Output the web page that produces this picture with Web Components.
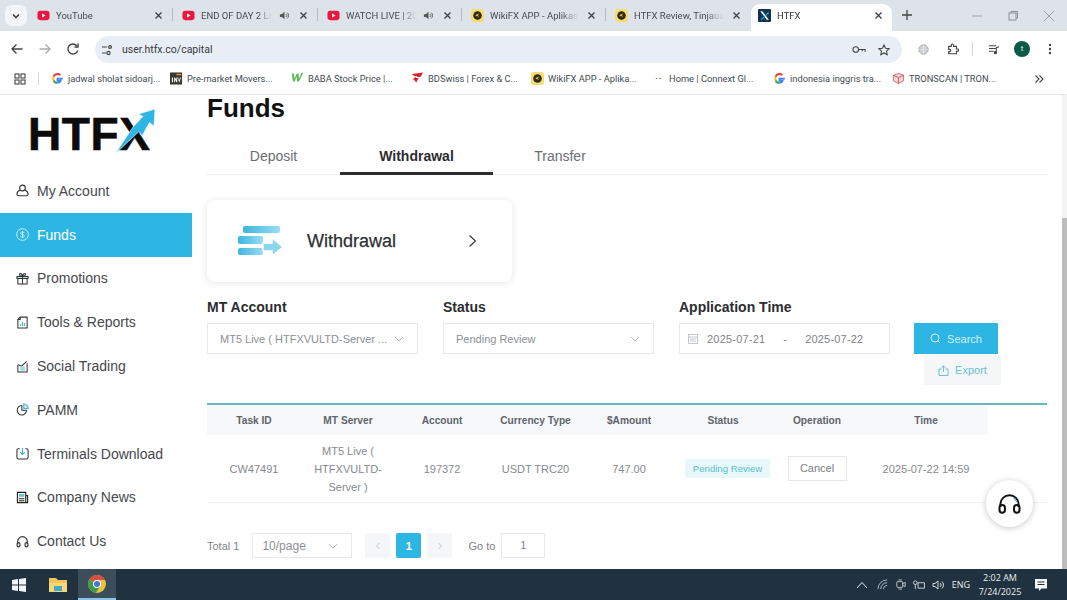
<!DOCTYPE html>
<html>
<head>
<meta charset="utf-8">
<title>HTFX</title>
<style>
html, body { margin: 0; height: 100%; overflow: hidden; background: #fff; }
body { display: flex; flex-direction: column; width: 1067px; height: 600px; font-family: "Liberation Sans", Arial, sans-serif; }
#middle { flex: 1; display: flex; min-height: 0; position: relative; }
</style>
</head>
<body>
<browser-tabs>
  <browser-tab icon="yt" width="145">YouTube</browser-tab>
  <browser-tab icon="yt" width="145" audio>END OF DAY 2 Live</browser-tab>
  <browser-tab icon="yt" width="144" audio>WATCH LIVE | 2025</browser-tab>
  <browser-tab icon="wiki" width="144">WikiFX APP - Aplikasi</browser-tab>
  <browser-tab icon="wiki" width="145" noline>HTFX Review, Tinjauan</browser-tab>
  <browser-tab icon="htfx" width="141" active>HTFX</browser-tab>
</browser-tabs>
<browser-toolbar>user.htfx.co/capital</browser-toolbar>
<bookmark-bar>
  <book-mark icon="g" width="119">jadwal sholat sidoarj...</book-mark>
  <book-mark icon="inv" width="121">Pre-market Movers...</book-mark>
  <book-mark icon="w" width="120">BABA Stock Price |...</book-mark>
  <book-mark icon="bd" width="120">BDSwiss | Forex &amp; C...</book-mark>
  <book-mark icon="wiki" width="121">WikiFX APP - Aplika...</book-mark>
  <book-mark icon="dash" width="121">Home | Connext Gl...</book-mark>
  <book-mark icon="g" width="119">indonesia inggris tra...</book-mark>
  <book-mark icon="tron" width="130">TRONSCAN | TRON...</book-mark>
</bookmark-bar>
<div id="middle">
  <side-nav>
    <side-item icon="user">My Account</side-item>
    <side-item icon="dollar" active>Funds</side-item>
    <side-item icon="gift">Promotions</side-item>
    <side-item icon="report">Tools &amp; Reports</side-item>
    <side-item icon="social">Social Trading</side-item>
    <side-item icon="pamm">PAMM</side-item>
    <side-item icon="download">Terminals Download</side-item>
    <side-item icon="news">Company News</side-item>
    <side-item icon="headset">Contact Us</side-item>
  </side-nav>
  <funds-page></funds-page>
  <page-scrollbar></page-scrollbar>
  <help-button></help-button>
</div>
<task-bar></task-bar>

<script>
/* global HTMLElement */

// Icons used in more than one component
const ICONS = {
  yt: '<svg viewBox="0 0 14 14"><rect x="0.5" y="2" width="13" height="10" rx="3" fill="#e8173f"/><path d="M5.6 4.9v4.2L9.2 7z" fill="#fff"/></svg>',
  wiki: '<svg viewBox="0 0 14 14"><rect width="14" height="14" rx="3" fill="#f6dd72"/><circle cx="7" cy="7" r="4.6" fill="#2b2a20"/><path d="M4.6 7.6c1.4-2.6 3.4-2.8 4.9-2.4-1.4.3-2 1-2.2 1.8 1 .1 1.5.6 1.6 1.2-1.4-.4-2.8-.6-4.3-.6z" fill="#e9b92b"/></svg>',
  htfx: '<svg viewBox="0 0 14 14"><rect width="14" height="14" rx="1" fill="#12344d"/><path d="M2.5 2.5h2.2l7 9H9.3z" fill="#fff"/><path d="M2.6 11.6l8.6-8.4.4 1.9-1 .2-6.4 6.3z" fill="#35b6e4"/></svg>',
  g: '<svg viewBox="0 0 14 14"><path d="M12.8 7.1H7v2.3h3.3c-.4 1.3-1.7 2.1-3.3 2.1" fill="none" stroke="#4285f4" stroke-width="2"/><path d="M7 11.9C5 11.9 3.4 10.7 2.7 9" fill="none" stroke="#34a853" stroke-width="2"/><path d="M2.7 9C2.4 7.7 2.4 6.4 2.8 5" fill="none" stroke="#fbbc05" stroke-width="2"/><path d="M2.8 5C3.5 3.3 5.1 2.1 7 2.1c1.2 0 2.3.4 3.1 1.2" fill="none" stroke="#ea4335" stroke-width="2"/></svg>',
  inv: '<svg viewBox="0 0 14 14"><rect width="13" height="13" y="0.5" fill="#3a3833"/><path d="M2 6h1.200v5H2zM4.500 6h1l1.300 3V6h1v5h-1L5.500 8v3h-1zM8.800 6l1 3.200 1-3.200h1l-1.500 5H10L8 6z" fill="#fff"/><rect x="7" y="2" width="5" height="1.5" fill="#e9a23b"/></svg>',
  w: '<svg viewBox="0 0 18 14"><path d="M1 2h3l1 7 3-7h2.400l.6 7 3.500-8H17l-6 12H8.300l-.5-6.500L5 13H2.600z" fill="#62b95c"/></svg>',
  bd: '<svg viewBox="0 0 16 14"><path d="M1 2.500L15 .5l-3.500 5.500H6.500l-1 1.500h4L6.500 13 5 11 2.500 8.500l3-2.500z" fill="#d9262e"/><path d="M3.500 5h4v1h-4z" fill="#fff"/></svg>',
  dash: '<svg viewBox="0 0 14 14"><path d="M4 7h2M7.500 7h2.500" stroke="#7f8f8f" stroke-width="1.3"/></svg>',
  tron: '<svg viewBox="0 0 14 14"><path d="M1.500 3.500L7 1.500l5.500 2v6L7 12.500l-5.500-3z" fill="#f1d8d8" stroke="#c6474f" stroke-width="0.8"/><path d="M1.500 3.500L7 6l5.500-2.500M7 6v6.500" fill="none" stroke="#c6474f" stroke-width="0.9"/></svg>',
  user: '<svg viewBox="0 0 14 14" fill="none" stroke="#333" stroke-width="1.2"><circle cx="7" cy="4.3" r="3.1"/><path d="M4.600 6.500C2.400 7.300 1 9 1 11c0 1.200.7 1.700 1.700 1.700h8.600c1 0 1.700-.5 1.700-1.700 0-2-1.400-3.700-3.600-4.500"/></svg>',
  dollar: '<svg viewBox="0 0 14 14" fill="none" stroke="#d5f1fb" stroke-width="1"><circle cx="7" cy="7" r="6.3"/><path d="M9 5.200C8.600 4.400 7.800 4.100 7 4.100c-1.100 0-1.900.6-1.900 1.400 0 1.800 3.900 1 3.900 2.900 0 .9-.9 1.500-2 1.500-.9 0-1.700-.4-2.100-1.100M7 3v8"/></svg>',
  gift: '<svg viewBox="0 0 14 14" fill="none" stroke="#333" stroke-width="1.1"><rect x="1" y="4.8" width="12" height="2.2" fill="#bfe6ea"/><path d="M2 7v5.800h10V7M7 4.800v8"/><path d="M7 4.500C5 4.500 3.500 3.700 3.800 2.300 4.300.9 6.400 1.900 7 4.500c.6-2.600 2.700-3.600 3.200-2.200.3 1.400-1.200 2.200-3.200 2.200z"/></svg>',
  report: '<svg viewBox="0 0 14 14" fill="none" stroke="#333" stroke-width="1.1"><path d="M4.500 1.200H12v11.600H2V3.700z"/><path d="M4.500 1.200v2.500H2"/><path d="M5 10.800V8.500M7 10.800V6.500M9 10.800V7.500" stroke="#56b8c4" stroke-width="1.2"/></svg>',
  social: '<svg viewBox="0 0 14 14" fill="none" stroke="#333" stroke-width="1.1"><path d="M2 5v8h10V3.500"/><path d="M2 5l4 1.700L11.500 1.500"/><rect x="4.5" y="7" width="5" height="4.5" fill="#9adbe0" stroke="none"/></svg>',
  pamm: '<svg viewBox="0 0 14 14" fill="none" stroke="#333" stroke-width="1.1"><path d="M6.300 2.800a5 5 0 1 0 5 5H6.300z"/><path d="M8.300 5.800V.8a5 5 0 0 1 5 5z" fill="#bfe6ea" stroke="#56b8c4"/></svg>',
  download: '<svg viewBox="0 0 14 14" fill="none" stroke="#333" stroke-width="1.1"><path d="M4 1.800H2.500A1.500 1.500 0 0 0 1 3.300v8A1.500 1.500 0 0 0 2.500 12.800h9a1.500 1.500 0 0 0 1.500-1.500v-8a1.500 1.500 0 0 0-1.500-1.500H10"/><path d="M7 1v6.500M4.500 5.500L7 8l2.500-2.500" stroke="#3fb4c9" stroke-width="1.3"/></svg>',
  news: '<svg viewBox="0 0 14 14" fill="none" stroke="#222" stroke-width="1.2"><path d="M1.500 1.500h9v11h-9zM10.500 5h2v7.500h-2"/><rect x="3" y="3.2" width="6" height="3" fill="#6cc3cf" stroke="none"/><path d="M3 8.300h6M3 10.500h6"/></svg>',
  headset: '<svg viewBox="0 0 14 14" fill="none" stroke="#333" stroke-width="1.3"><path d="M1.800 9V7a5.200 5.200 0 0 1 10.400 0v2"/><rect x="1.2" y="8.2" width="3" height="4.6" rx="1.5"/><rect x="9.8" y="8.2" width="3" height="4.6" rx="1.5"/></svg>'
}

const tabStripTemplate = document.createElement('template')
tabStripTemplate.innerHTML = `
<style>
:host {
  display: flex;
  align-items: flex-end;
  height: 31px;
  background: #dee3e9;
  font-family: Roboto, "Liberation Sans", sans-serif;
  padding-left: 5px;
  flex: none;
}
#menu {
  width: 22px;
  height: 21px;
  margin: 0 1px 5px 0;
  border-radius: 7px;
  background: #f3f5f8;
  display: flex;
  align-items: center;
  justify-content: center;
}
#menu svg { width: 8px; height: 6px; }
#plus {
  width: 14px;
  height: 14px;
  margin: 0 0 9px 8px;
}
#win {
  margin-left: auto;
  display: flex;
  align-self: stretch;
  align-items: center;
  padding-right: 11px;
  gap: 22px;
}
#win svg { width: 14px; height: 14px; }
</style>
<div id="menu"><svg viewBox="0 0 8 6"><path d="M1 1.500l3 3 3-3" fill="none" stroke="#333" stroke-width="1.4"/></svg></div>
<slot></slot>
<svg id="plus" viewBox="0 0 14 14"><path d="M7 2v10M2 7h10" stroke="#444" stroke-width="1.3"/></svg>
<div id="win">
  <svg viewBox="0 0 14 14"><path d="M2 7h10" stroke="#9ba1a8" stroke-width="1"/></svg>
  <svg viewBox="0 0 14 14" fill="none" stroke="#8b9198" stroke-width="1"><rect x="3" y="4" width="7" height="7"/><path d="M5 4V2.500h6.500V9H10"/></svg>
  <svg viewBox="0 0 14 14"><path d="M2 2l10 10M12 2L2 12" stroke="#9ba1a8" stroke-width="1"/></svg>
</div>`

class BrowserTabs extends HTMLElement {
  constructor () {
    super()
    this.attachShadow({ mode: 'open' }).appendChild(tabStripTemplate.content.cloneNode(true))
  }
}

const tabTemplate = document.createElement('template')
tabTemplate.innerHTML = `
<style>
:host {
  display: flex;
  align-items: center;
  box-sizing: border-box;
  height: 26px;
  padding: 0 9px 5px 9px;
  font-size: 9.5px;
  color: #444b52;
  position: relative;
  flex: none;
}
:host([active]) {
  background: #fff;
  border-radius: 9px 9px 0 0;
  padding: 0 8px 5px 7px;
  color: #30343a;
  height: 27px;
}
:host(:not([active]))::after {
  content: '';
  position: absolute;
  right: 0;
  top: 3px;
  height: 13px;
  width: 1px;
  background: #b6bcc4;
}
:host([noline])::after { display: none; }
#icon { width: 13px; height: 13px; flex: none; display: block; }
#text {
  flex: 1;
  margin-left: 6px;
  white-space: nowrap;
  overflow: hidden;
  -webkit-mask-image: linear-gradient(to right, #000 80%, transparent);
  mask-image: linear-gradient(to right, #000 80%, transparent);
}
.ctl { width: 11px; height: 11px; flex: none; margin-left: 7px; }
</style>
<span id="icon"></span>
<span id="text"><slot></slot></span>
<svg class="ctl" id="audio" viewBox="0 0 12 12" style="margin-right:1px"><path d="M1 4.500h2L6 2v8L3 7.500H1z" fill="#555"/><path d="M7.500 4.300a2.200 2.200 0 0 1 0 3.400M9 2.800a4.400 4.400 0 0 1 0 6.400" stroke="#555" fill="none"/></svg>
<svg class="ctl" id="close" viewBox="0 0 11 11"><path d="M2.500 2.500l6 6M8.500 2.500l-6 6" stroke="#444" stroke-width="1.4"/></svg>`

class BrowserTab extends HTMLElement {
  constructor () {
    super()
    this.shadow = this.attachShadow({ mode: 'open' })
    this.shadow.appendChild(tabTemplate.content.cloneNode(true))
  }

  connectedCallback () {
    this.style.width = this.getAttribute('width') + 'px'
    this.shadow.getElementById('icon').innerHTML = ICONS[this.getAttribute('icon')]
    if (!this.hasAttribute('audio')) {
      this.shadow.getElementById('audio').style.display = 'none'
    }
  }
}

const toolbarTemplate = document.createElement('template')
toolbarTemplate.innerHTML = `
<style>
:host {
  display: flex;
  align-items: center;
  height: 32px;
  background: #fff;
  font-family: Roboto, "Liberation Sans", sans-serif;
  flex: none;
}
svg { flex: none; display: block; }
#nav { display: flex; align-items: center; gap: 14px; padding: 4px 0 0 10px; width: 95px; box-sizing: border-box; }
#nav svg { width: 14px; height: 14px; }
#omni {
  width: 807px;
  height: 27px;
  margin-top: 5px;
  border-radius: 13.5px;
  background: #e9eef6;
  display: flex;
  align-items: center;
  box-sizing: border-box;
  padding: 0 12px 0 7px;
  font-size: 10.5px;
  color: #333a41;
}
#url { margin-left: 10px; flex: 1; }
#right { display: flex; align-items: center; padding-top: 4px; }
</style>
<div id="nav">
  <svg viewBox="0 0 14 14" fill="none" stroke="#444" stroke-width="1.4"><path d="M12.500 7H2M6.500 2.500L2 7l4.500 4.500"/></svg>
  <svg viewBox="0 0 14 14" fill="none" stroke="#a9adb2" stroke-width="1.4"><path d="M1.500 7H12M7.500 2.500L12 7l-4.500 4.500"/></svg>
  <svg viewBox="0 0 14 14" fill="none" stroke="#444" stroke-width="1.4"><path d="M11.700 8.500a5 5 0 1 1-.9-4.700"/><path d="M12 1.500v3.500H8.500"/></svg>
</div>
<div id="omni">
  <svg width="10" height="12" viewBox="0 0 10 12" fill="none" stroke="#444" stroke-width="1.2"><path d="M0 3h5M0 9h4"/><circle cx="8" cy="3" r="1.4"/><circle cx="6.500" cy="9" r="1.6"/></svg>
  <span id="url"><slot></slot></span>
  <svg width="14" height="11" viewBox="0 0 15 11" fill="none" stroke="#444" stroke-width="1.2" style="margin-right:12px"><circle cx="4" cy="5.500" r="3"/><path d="M7 5.500h7v2.500M11 5.500v2"/></svg>
  <svg width="12" height="12" viewBox="0 0 13 13" fill="none" stroke="#444" stroke-width="1.1"><path d="M6.500 1l1.700 3.600 3.900.5-2.900 2.700.8 3.900-3.500-2-3.500 2 .8-3.900L.9 5.100l3.900-.5z"/></svg>
</div>
<div id="right">
  <svg width="11" height="11" viewBox="0 0 13 13" style="margin-left:16px" fill="none" stroke="#9aa0a6"><circle cx="6.500" cy="6.500" r="5.500" fill="#c9ccd0"/><path d="M1 6.500h11M6.500 1v11M3 3c2 1 5 1 7 0M3 10c2-1 5-1 7 0" stroke="#eef0f2" stroke-width="0.7"/></svg>
  <svg width="12" height="12" viewBox="0 0 14 14" style="margin-left:18px" fill="none" stroke="#444" stroke-width="1.3"><path d="M2 4h3V2.500a1.300 1.300 0 0 1 2.600 0V4h3.400v3h1.200a1.300 1.300 0 0 1 0 2.600H11v3H2V10h1a1.300 1.300 0 0 0 0-2.600H2z"/></svg>
  <span style="width:1px;height:14px;background:#d5d8dc;margin-left:13px"></span>
  <svg width="12" height="11" viewBox="0 0 13 12" style="margin-left:15px" fill="none" stroke="#444" stroke-width="1.1"><path d="M1 2h8M1 5h8M1 8h5M9 9.500V4l3-1"/><circle cx="8" cy="9.500" r="1.2" fill="#444"/></svg>
  <div style="width:16px;height:16px;border-radius:50%;background:#0b5a45;color:#dfe;font-size:8px;line-height:16px;text-align:center;margin-left:14px">t</div>
  <svg width="4" height="12" viewBox="0 0 4 12" style="margin-left:18px" fill="#444"><circle cx="2" cy="2" r="1.2"/><circle cx="2" cy="6" r="1.2"/><circle cx="2" cy="10" r="1.2"/></svg>
</div>`

class BrowserToolbar extends HTMLElement {
  constructor () {
    super()
    this.attachShadow({ mode: 'open' }).appendChild(toolbarTemplate.content.cloneNode(true))
  }
}

const bookmarksTemplate = document.createElement('template')
bookmarksTemplate.innerHTML = `
<style>
:host {
  display: flex;
  align-items: center;
  background: #fff;
  border-bottom: 1px solid #e6e8ea;
  box-sizing: border-box;
  height: 32px;
  padding-left: 14px;
  font-family: Roboto, "Liberation Sans", sans-serif;
  flex: none;
}
#apps { width: 12px; height: 12px; flex: none; }
#line { width: 1px; height: 13px; background: #d5d8dc; margin: 0 12px; flex: none; }
#more { margin-left: 12px; width: 10px; height: 10px; flex: none; }
</style>
<svg id="apps" viewBox="0 0 12 12" fill="none" stroke="#444" stroke-width="1.1"><rect x="1" y="1" width="4" height="4"/><rect x="7" y="1" width="4" height="4"/><rect x="1" y="7" width="4" height="4"/><rect x="7" y="7" width="4" height="4"/></svg>
<span id="line"></span>
<slot></slot>
<svg id="more" viewBox="0 0 10 10" fill="none" stroke="#444" stroke-width="1.1"><path d="M1.500 1.500L5 5 1.500 8.500M5.500 1.500L9 5 5.500 8.500"/></svg>`

class BookmarkBar extends HTMLElement {
  constructor () {
    super()
    this.attachShadow({ mode: 'open' }).appendChild(bookmarksTemplate.content.cloneNode(true))
  }
}

const bookMarkTemplate = document.createElement('template')
bookMarkTemplate.innerHTML = `
<style>
:host {
  display: flex;
  align-items: center;
  font-size: 9.3px;
  color: #444b52;
  white-space: nowrap;
  flex: none;
}
#icon { width: 13px; height: 13px; flex: none; margin-right: 4px; display: block; }
</style>
<span id="icon"></span><slot></slot>`

class BookMark extends HTMLElement {
  constructor () {
    super()
    this.shadow = this.attachShadow({ mode: 'open' })
    this.shadow.appendChild(bookMarkTemplate.content.cloneNode(true))
  }

  connectedCallback () {
    this.style.width = this.getAttribute('width') + 'px'
    this.shadow.getElementById('icon').innerHTML = ICONS[this.getAttribute('icon')]
  }
}

const sideNavTemplate = document.createElement('template')
sideNavTemplate.innerHTML = `
<style>
:host {
  display: block;
  width: 192px;
  flex: none;
  background: #fff;
}
#logo {
  height: 74px;
  padding-left: 28px;
  box-sizing: border-box;
  position: relative;
  font: bold 46px/78px "Liberation Sans", Arial, sans-serif;
  letter-spacing: 0.6px;
  color: #0b0b0b;
  -webkit-text-stroke: 0.6px #0b0b0b;
}
/* arrow lies over the X of the wordmark */
#logo svg {
  position: absolute;
  left: 112px;
  top: 12px;
  width: 44px;
  height: 50px;
}
</style>
<div id="logo">HTFX<svg viewBox="0 0 44 50"><path d="M3 47L21 20 31 9.500 26.500 7 43 2 42 19 37.500 15.500 30 29 27 24.500z" fill="#2eb5e3" stroke="#fff" stroke-width="0.6"/></svg></div>
<slot></slot>`

class SideNav extends HTMLElement {
  constructor () {
    super()
    this.attachShadow({ mode: 'open' }).appendChild(sideNavTemplate.content.cloneNode(true))
  }
}

const sideItemTemplate = document.createElement('template')
sideItemTemplate.innerHTML = `
<style>
:host {
  display: flex;
  align-items: center;
  height: 43.8px;
  padding-left: 16px;
  font-size: 14px;
  color: #45484d;
  gap: 8px;
}
:host([active]) {
  background: #2db6e4;
  color: #fff;
}
#icon { width: 13px; height: 13px; display: block; flex: none; }
</style>
<span id="icon"></span><slot></slot>`

class SideItem extends HTMLElement {
  constructor () {
    super()
    this.shadow = this.attachShadow({ mode: 'open' })
    this.shadow.appendChild(sideItemTemplate.content.cloneNode(true))
  }

  connectedCallback () {
    this.shadow.getElementById('icon').innerHTML = ICONS[this.getAttribute('icon')]
  }
}

const selectTemplate = document.createElement('template')
selectTemplate.innerHTML = `
<style>
:host {
  display: flex;
  align-items: center;
  box-sizing: border-box;
  height: 31px;
  border: 1px solid #e7e9ec;
  padding: 0 13px 0 12px;
  font-size: 11px;
  color: #8c9097;
  background: #fff;
  white-space: nowrap;
}
span { flex: 1; overflow: hidden; }
svg { width: 10px; height: 6px; flex: none; }
</style>
<span><slot></slot></span>
<svg viewBox="0 0 10 6"><path d="M1 1l4 4 4-4" fill="none" stroke="#b6bac0" stroke-width="1"/></svg>`

class FormSelect extends HTMLElement {
  constructor () {
    super()
    this.attachShadow({ mode: 'open' }).appendChild(selectTemplate.content.cloneNode(true))
  }
}

const fieldTemplate = document.createElement('template')
fieldTemplate.innerHTML = `
<style>
:host { display: block; width: 211px; flex: none; }
#label {
  font-size: 14px;
  font-weight: bold;
  color: #2b2d30;
  height: 16px;
  line-height: 16px;
  margin-bottom: 8px;
}
</style>
<div id="label"></div>
<slot></slot>`

class FilterField extends HTMLElement {
  constructor () {
    super()
    this.shadow = this.attachShadow({ mode: 'open' })
    this.shadow.appendChild(fieldTemplate.content.cloneNode(true))
  }

  connectedCallback () {
    this.shadow.getElementById('label').textContent = this.getAttribute('label')
  }
}

const dateTemplate = document.createElement('template')
dateTemplate.innerHTML = `
<style>
:host {
  display: flex;
  align-items: center;
  box-sizing: border-box;
  height: 31px;
  border: 1px solid #e7e9ec;
  padding-left: 8px;
  font-size: 11px;
  letter-spacing: 0.2px;
  color: #7f838a;
  white-space: nowrap;
}
svg { width: 10px; height: 10px; flex: none; margin-right: 9px; }
#dash { margin: 0 18px; }
</style>
<svg viewBox="0 0 10 10" fill="none" stroke="#b9bdc2" stroke-width="0.8"><rect x="0.5" y="0.5" width="9" height="9"/><path d="M0.5 3h9M2 5h6M2 7h6"/></svg>
<span>2025-07-21</span><span id="dash">-</span><span>2025-07-22</span>`

class DateRange extends HTMLElement {
  constructor () {
    super()
    this.attachShadow({ mode: 'open' }).appendChild(dateTemplate.content.cloneNode(true))
  }
}

const tableTemplate = document.createElement('template')
tableTemplate.innerHTML = `
<style>
:host {
  display: block;
  border-top: 2px solid #62b9bd;
  font-size: 11px;
  color: #85898f;
}
.row {
  display: grid;
  grid-template-columns: 94px 94px 94px 93px 94px 94px 94px 124px;
  width: 781px;
  text-align: center;
  align-items: center;
}
#head {
  height: 30px;
  background: #f7f8fa;
  font-weight: bold;
  font-size: 10.2px;
  color: #5f646b;
}
#wrap { border-bottom: 1px solid #eff1f3; }
#body { height: 67px; line-height: 18px; }
#tag {
  justify-self: end;
  background: #e8f7fa;
  color: #58bfd0;
  font-size: 9.6px;
  height: 19px;
  line-height: 19px;
  width: 85px;
  border-radius: 2px;
  white-space: nowrap;
}
#cancel {
  justify-self: center;
  width: 59px;
  height: 25px;
  line-height: 23px;
  box-sizing: border-box;
  border: 1px solid #e4e6e9;
  color: #7c8087;
}
</style>
<div class="row" id="head">
  <div>Task ID</div><div>MT Server</div><div>Account</div><div>Currency Type</div><div>$Amount</div><div>Status</div><div>Operation</div><div>Time</div>
</div>
<div id="wrap">
  <div class="row" id="body">
    <div>CW47491</div>
    <div>MT5 Live (<br>HTFXVULTD-<br>Server )</div>
    <div>197372</div>
    <div>USDT TRC20</div>
    <div>747.00</div>
    <div id="tag">Pending Review</div>
    <div id="cancel">Cancel</div>
    <div>2025-07-22 14:59</div>
  </div>
</div>`

class WithdrawTable extends HTMLElement {
  constructor () {
    super()
    this.attachShadow({ mode: 'open' }).appendChild(tableTemplate.content.cloneNode(true))
  }
}

const pagerTemplate = document.createElement('template')
pagerTemplate.innerHTML = `
<style>
:host {
  display: flex;
  align-items: center;
  height: 25px;
  font-size: 11px;
  color: #7f838a;
}
form-select { width: 100px; height: 25px; margin-left: 13px; font-size: 12px; padding-left: 9px; }
.btn {
  width: 25px;
  height: 25px;
  background: #f5f6f8;
  display: flex;
  align-items: center;
  justify-content: center;
  margin-left: 6px;
  border-radius: 2px;
}
.btn svg { width: 6px; height: 8px; }
#on { background: #2db6e4; color: #fff; font-weight: bold; }
#goto { margin-left: 16px; }
#page {
  width: 44px;
  height: 25px;
  box-sizing: border-box;
  border: 1px solid #e7e9ec;
  margin-left: 6px;
  text-align: center;
  line-height: 23px;
}
</style>
<span>Total 1</span>
<form-select>10/page</form-select>
<div class="btn" style="margin-left:13px"><svg viewBox="0 0 6 8"><path d="M4.500 1L1.500 4l3 3" fill="none" stroke="#c3c7cc"/></svg></div>
<div class="btn" id="on">1</div>
<div class="btn"><svg viewBox="0 0 6 8"><path d="M1.500 1l3 3-3 3" fill="none" stroke="#c3c7cc"/></svg></div>
<span id="goto">Go to</span>
<div id="page">1</div>`

class PageBar extends HTMLElement {
  constructor () {
    super()
    this.attachShadow({ mode: 'open' }).appendChild(pagerTemplate.content.cloneNode(true))
  }
}

const fundsTemplate = document.createElement('template')
fundsTemplate.innerHTML = `
<style>
:host {
  display: block;
  flex: 1;
  min-width: 0;
  padding: 0 15px 0 15px;
  background: #fff;
}
h1 {
  margin: 0;
  height: 27px;
  font-size: 26px;
  line-height: 27px;
  color: #111;
  font-weight: bold;
}
#tabs {
  display: flex;
  margin-top: 15px;
  height: 38px;
  border-bottom: 1px solid #eceef0;
  box-sizing: border-box;
  font-size: 14px;
  color: #6a6e74;
}
#tabs div { text-align: center; line-height: 38px; height: 38px; box-sizing: border-box; }
#tabs .on { color: #2b2d30; font-weight: bold; border-bottom: 3px solid #2b2d30; }
#card {
  margin-top: 25px;
  width: 305px;
  height: 82px;
  border-radius: 8px;
  box-shadow: 0 1px 8px rgba(0, 0, 0, 0.1);
  display: flex;
  align-items: center;
  padding-left: 31px;
  box-sizing: border-box;
  font-size: 18px;
  color: #2e3034;
  -webkit-text-stroke: 0.25px #2e3034;
}
#card .art { width: 45px; height: 32px; flex: none; margin-right: 24px; }
#card .go { width: 9px; height: 14px; margin-left: 72px; flex: none; }
#filters { display: flex; gap: 25px; margin-top: 17px; height: 104px; }
#actions { margin-left: -1px; padding-top: 24px; width: 90px; flex: none; }
#search {
  width: 84px;
  height: 31px;
  background: #2db6e4;
  color: #d4f0fa;
  font-size: 11px;
  display: flex;
  align-items: center;
  justify-content: center;
  gap: 6px;
}
#export {
  width: 77px;
  height: 30px;
  margin: 1px 0 0 10px;
  background: #f5f6f8;
  color: #6fc0d0;
  font-size: 11px;
  display: flex;
  align-items: center;
  justify-content: center;
  gap: 6px;
}
#search svg, #export svg { width: 11px; height: 11px; }
page-bar { margin-top: 30px; }
</style>
<h1>Funds</h1>
<div id="tabs">
  <div style="width:133px">Deposit</div>
  <div class="on" style="width:153px">Withdrawal</div>
  <div style="width:134px">Transfer</div>
</div>
<div id="card">
  <svg class="art" viewBox="0 0 45 32">
    <defs><linearGradient id="bar" x1="0" x2="1"><stop offset="0" stop-color="#3db6de"/><stop offset="1" stop-color="#9adcf1"/></linearGradient></defs>
    <rect x="5" y="1" width="37" height="7" rx="2" fill="url(#bar)"/>
    <rect x="0" y="11" width="25" height="8" rx="2" fill="url(#bar)"/>
    <rect x="0" y="23" width="25" height="7" rx="2" fill="url(#bar)"/>
    <path d="M25 18h9v-5l11 9-11 9v-5h-9z" fill="#8ed6ee" stroke="#fff" stroke-width="1.5"/>
  </svg>
  <span>Withdrawal</span>
  <svg class="go" viewBox="0 0 9 14"><path d="M1.500 1.500L7.500 7l-6 5.500" fill="none" stroke="#333" stroke-width="1.1"/></svg>
</div>
<div id="filters">
  <filter-field label="MT Account"><form-select>MT5 Live ( HTFXVULTD-Server ...</form-select></filter-field>
  <filter-field label="Status"><form-select>Pending Review</form-select></filter-field>
  <filter-field label="Application Time"><date-range></date-range></filter-field>
  <div id="actions">
    <div id="search"><svg viewBox="0 0 11 11" fill="none" stroke="#d4f0fa"><circle cx="5" cy="5" r="4"/><path d="M8 8l2 2"/></svg>Search</div>
    <div id="export"><svg viewBox="0 0 11 11" fill="none" stroke="#6fc0d0"><path d="M3.500 4H1v6.500h9V4H7.500M5.500 7V1M3.500 2.800l2-2 2 2"/></svg>Export</div>
  </div>
</div>
<withdraw-table></withdraw-table>
<page-bar></page-bar>`

class FundsPage extends HTMLElement {
  constructor () {
    super()
    this.attachShadow({ mode: 'open' }).appendChild(fundsTemplate.content.cloneNode(true))
  }
}

const scrollTemplate = document.createElement('template')
scrollTemplate.innerHTML = `
<style>
:host { display: flex; flex-direction: column; width: 5px; flex: none; background: #f4f4f4; }
#thumb { margin-top: 123px; flex: 1; background: #bdbdbd; }
</style>
<div id="thumb"></div>`

class PageScrollbar extends HTMLElement {
  constructor () {
    super()
    this.attachShadow({ mode: 'open' }).appendChild(scrollTemplate.content.cloneNode(true))
  }
}

const helpTemplate = document.createElement('template')
helpTemplate.innerHTML = `
<style>
/* floats over the page */
:host {
  position: absolute;
  left: 986px;
  top: 385px;
  width: 47px;
  height: 47px;
  border-radius: 50%;
  background: #fff;
  box-shadow: 0 1px 6px rgba(0, 0, 0, 0.22);
  display: flex;
  align-items: center;
  justify-content: center;
}
svg { width: 23px; height: 20px; }
</style>
<svg viewBox="0 0 25 22" fill="none" stroke="#111" stroke-width="2.2"><path d="M2.500 14V11a10 9.500 0 0 1 20 0v3"/><rect x="1.500" y="12" width="6" height="8.500" rx="3"/><rect x="17.500" y="12" width="6" height="8.500" rx="3"/><path d="M17 4.500a9 9 0 0 1 3.500 4.500" stroke="#58b9cf" stroke-width="1.3"/></svg>`

class HelpButton extends HTMLElement {
  constructor () {
    super()
    this.attachShadow({ mode: 'open' }).appendChild(helpTemplate.content.cloneNode(true))
  }
}

const taskbarTemplate = document.createElement('template')
taskbarTemplate.innerHTML = `
<style>
:host {
  display: flex;
  align-items: center;
  height: 31px;
  background: #20323f;
  color: #e8edf0;
  font-family: "Open Sans", "Liberation Sans", sans-serif;
  flex: none;
}
.app { display: flex; align-items: center; justify-content: center; height: 31px; box-sizing: border-box; flex: none; }
#tray { margin-left: auto; display: flex; align-items: center; }
#clock { text-align: center; font-size: 9px; line-height: 14px; width: 60px; }
</style>
<div class="app" style="width:38px"><svg width="14" height="14" viewBox="0 0 14 14" fill="#f4f6f7"><path d="M0 2l6-.9V6.600H0zM7 1l7-1v6.600H7zM0 7.400h6v5.500L0 12zM7 7.400h7V14l-7-1z"/></svg></div>
<div class="app" style="width:40px"><svg width="18" height="15" viewBox="0 0 18 15"><path d="M0 1h7l2 2h9v12H0z" fill="#f1c558"/><path d="M0 6h18v9H0z" fill="#f6d77a"/><rect x="5" y="9" width="8" height="5" fill="#4aa6c9"/></svg></div>
<div class="app" style="width:38px;background:#3c4e5a;border-bottom:2px solid #8cc4e8">
  <svg width="18" height="18" viewBox="0 0 18 18" fill="none"><circle cx="9" cy="9" r="9" fill="#e8c33c"/><path d="M1.200 4.500A9 9 0 0 1 17 5H9a4 4 0 0 0-3.500 2z" fill="#d8503f"/><path d="M1.200 4.500A9 9 0 0 0 8 17.900L11.600 12a4 4 0 0 1-6.100-5z" fill="#3f9c4f"/><circle cx="9" cy="9" r="3.900" fill="#fff"/><circle cx="9" cy="9" r="3" fill="#3d78d8"/></svg>
</div>
<div id="tray">
  <svg width="12" height="8" viewBox="0 0 12 8" fill="none" stroke="#e8edf0" stroke-width="1"><path d="M1 7l5-5.500L11 7"/></svg>
  <svg width="12" height="11" viewBox="0 0 13 12" style="margin-left:9px" fill="none" stroke="#b9c2c8" stroke-width="1"><path d="M1 11A10 10 0 0 1 11 1M4 11a7 7 0 0 1 7-7M7 11a4 4 0 0 1 4-4"/></svg>
  <svg width="10" height="13" viewBox="0 0 12 14" style="margin-left:7px" fill="none" stroke="#e8edf0" stroke-width="0.9"><rect x="1" y="3.500" width="7" height="7" rx="1"/><path d="M8 6l3-1.500v5L8 8M3 1.500h4M3 12.500h4"/></svg>
  <svg width="13" height="10" viewBox="0 0 14 11" style="margin-left:6px" fill="none" stroke="#e8edf0" stroke-width="0.9"><circle cx="3.500" cy="3" r="2"/><path d="M3.500 5v5M6.500 3h7v6h-7z"/></svg>
  <svg width="13" height="12" viewBox="0 0 13 12" style="margin-left:7px" fill="none" stroke="#e8edf0" stroke-width="0.9"><path d="M1 4.500h2L6 2v8L3 7.500H1zM8 4a2.500 2.500 0 0 1 0 4M10 2.500a5 5 0 0 1 0 7"/></svg>
  <span style="font-size:9px;margin-left:7px">ENG</span>
  <div id="clock">2:02 AM<br>7/24/2025</div>
  <svg width="14" height="14" viewBox="0 0 14 14" style="margin:0 19px 0 4px" fill="#f4f6f7"><path d="M1 1h12v9.500H7.500L5 13v-2.500H1z"/><path d="M3.500 4h7M3.500 6.500h7" stroke="#20323f"/></svg>
</div>`

class TaskBar extends HTMLElement {
  constructor () {
    super()
    this.attachShadow({ mode: 'open' }).appendChild(taskbarTemplate.content.cloneNode(true))
  }
}

window.customElements.define('browser-tabs', BrowserTabs)
window.customElements.define('browser-tab', BrowserTab)
window.customElements.define('browser-toolbar', BrowserToolbar)
window.customElements.define('bookmark-bar', BookmarkBar)
window.customElements.define('book-mark', BookMark)
window.customElements.define('side-nav', SideNav)
window.customElements.define('side-item', SideItem)
window.customElements.define('form-select', FormSelect)
window.customElements.define('filter-field', FilterField)
window.customElements.define('date-range', DateRange)
window.customElements.define('withdraw-table', WithdrawTable)
window.customElements.define('page-bar', PageBar)
window.customElements.define('funds-page', FundsPage)
window.customElements.define('page-scrollbar', PageScrollbar)
window.customElements.define('help-button', HelpButton)
window.customElements.define('task-bar', TaskBar)
</script>
</body>
</html>
